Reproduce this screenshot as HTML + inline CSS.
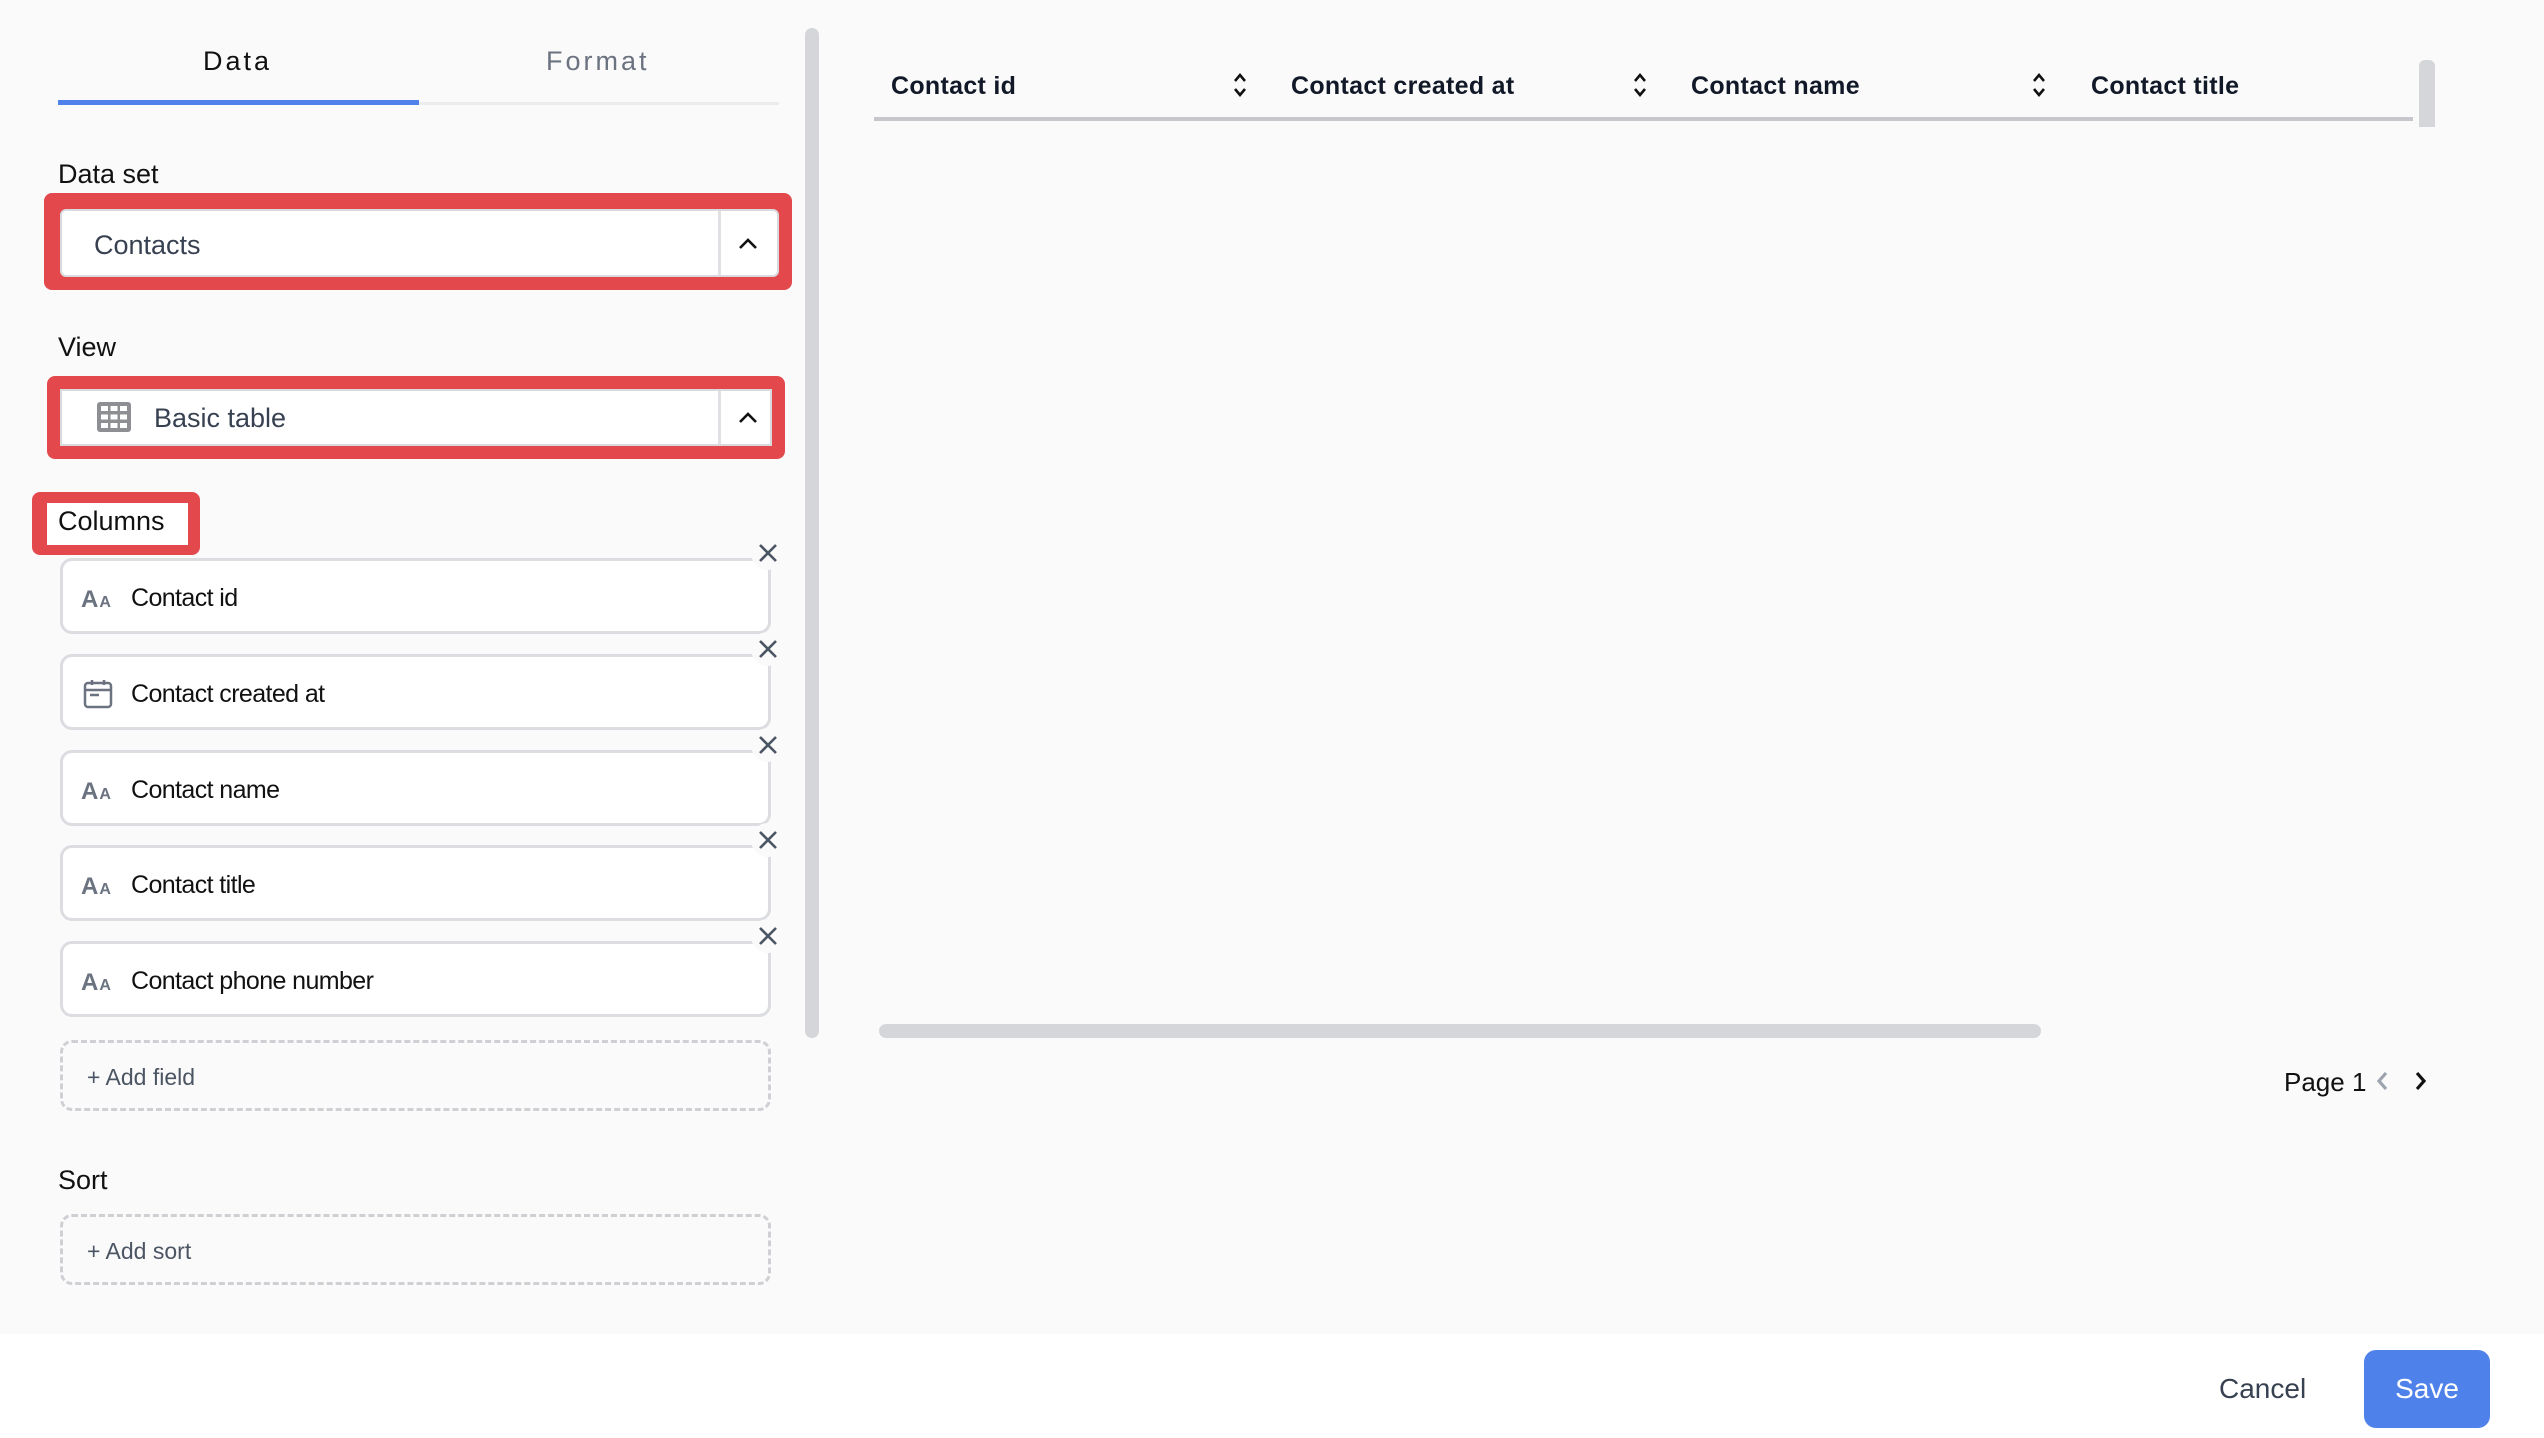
<!DOCTYPE html>
<html><head><meta charset="utf-8"><style>
*{margin:0;padding:0;box-sizing:border-box}
body{width:2544px;height:1438px;background:#fafafa;font-family:"Liberation Sans",sans-serif;color:#111827;position:relative;overflow:hidden}
.a{position:absolute}
.lbl{font-size:27px;color:#111;line-height:1}
.tab{font-size:27px;letter-spacing:3px;line-height:1}
.red{background:#e3484d;border-radius:8px}
.inp{background:#fff;border:2px solid #d9dadd;border-radius:6px}
.card{position:absolute;left:60px;width:711px;height:76px;background:#fff;border:3px solid #dcdde0;border-radius:12px}
.card span{position:absolute;left:68px;top:23px;font-size:25px;letter-spacing:-0.6px;color:#111}
.aa{position:absolute;left:18px;top:25px;font-size:24px;color:#6b7280;font-weight:bold;letter-spacing:1px}
.aa small{font-size:16px}
.dash{position:absolute;left:60px;width:711px;height:71px;border:3px dashed #cfd0d4;border-radius:12px}
.dash span{position:absolute;left:24px;top:21px;font-size:23px;color:#4b5563}
.th{position:absolute;top:72px;font-size:25px;font-weight:bold;letter-spacing:0.3px;color:#111827}
</style></head><body>
<div class="a tab" style="left:203px;top:48px;color:#111">Data</div>
<div class="a tab" style="left:546px;top:48px;color:#6b7280">Format</div>
<div class="a" style="left:58px;top:102px;width:721px;height:3px;background:#ececee"></div>
<div class="a" style="left:58px;top:100px;width:361px;height:5px;background:#4f81eb"></div>
<div class="a" style="left:805px;top:28px;width:14px;height:1010px;background:#d4d6da;border-radius:7px"></div>

<div class="a lbl" style="left:58px;top:161px">Data set</div>
<div class="a red" style="left:44px;top:193px;width:748px;height:97px"></div>
<div class="a inp" style="left:60px;top:209px;width:719px;height:68px"></div>
<div class="a" style="left:94px;top:230px;font-size:27px;color:#374151">Contacts</div>
<div class="a" style="left:718px;top:211px;width:3px;height:64px;background:#e0e1e4"></div>
<svg class="a" style="left:736px;top:233px" width="24" height="20" viewBox="0 0 24 20"><path d="M4 15 L12 7 L20 15" fill="none" stroke="#111" stroke-width="2.6"/></svg>

<div class="a lbl" style="left:58px;top:334px">View</div>
<div class="a red" style="left:47px;top:376px;width:738px;height:83px"></div>
<div class="a inp" style="left:60px;top:389px;width:712px;height:57px;border-radius:0"></div>
<svg class="a" style="left:97px;top:402px" width="34" height="30" viewBox="0 0 34 30"><rect x="0" y="0" width="34" height="30" rx="3" fill="#8e8f93"/><g fill="#fff"><rect x="4" y="4" width="7" height="5"/><rect x="13.5" y="4" width="7" height="5"/><rect x="23" y="4" width="7" height="5"/><rect x="4" y="12.5" width="7" height="5"/><rect x="13.5" y="12.5" width="7" height="5"/><rect x="23" y="12.5" width="7" height="5"/><rect x="4" y="21" width="7" height="5"/><rect x="13.5" y="21" width="7" height="5"/><rect x="23" y="21" width="7" height="5"/></g></svg>
<div class="a" style="left:154px;top:403px;font-size:27px;color:#374151">Basic table</div>
<div class="a" style="left:718px;top:391px;width:3px;height:53px;background:#e0e1e4"></div>
<svg class="a" style="left:736px;top:407px" width="24" height="20" viewBox="0 0 24 20"><path d="M4 15 L12 7 L20 15" fill="none" stroke="#111" stroke-width="2.6"/></svg>

<div class="a red" style="left:32px;top:492px;width:168px;height:63px"></div>
<div class="a" style="left:47px;top:503px;width:141px;height:42px;background:#fff"></div>
<div class="a lbl" style="left:58px;top:508px">Columns</div>

<div class="card" style="top:558px"><div class="aa">A<small>A</small></div><span>Contact id</span></div>
<div class="card" style="top:654px"><svg style="position:absolute;left:20px;top:22px" width="30" height="30" viewBox="0 0 30 30"><rect x="2" y="4" width="26" height="24" rx="3" fill="none" stroke="#6b7280" stroke-width="2.5"/><line x1="2" y1="11" x2="28" y2="11" stroke="#6b7280" stroke-width="2.5"/><line x1="9" y1="1" x2="9" y2="6" stroke="#6b7280" stroke-width="2.5"/><line x1="21" y1="1" x2="21" y2="6" stroke="#6b7280" stroke-width="2.5"/><line x1="7" y1="16" x2="16" y2="16" stroke="#6b7280" stroke-width="2.5"/></svg><span>Contact created at</span></div>
<div class="card" style="top:750px"><div class="aa">A<small>A</small></div><span>Contact name</span></div>
<div class="card" style="top:845px"><div class="aa">A<small>A</small></div><span>Contact title</span></div>
<div class="card" style="top:941px"><div class="aa">A<small>A</small></div><span>Contact phone number</span></div>

<svg class="a" style="left:750px;top:535px" width="36" height="440" viewBox="0 0 36 440">
<g fill="#fafafa"><circle cx="18" cy="18" r="17"/><circle cx="18" cy="114" r="17"/><circle cx="18" cy="210" r="17"/><circle cx="18" cy="305" r="17"/><circle cx="18" cy="401" r="17"/></g>
<g stroke="#4b5563" stroke-width="2.6" fill="none"><path d="M10 10 L26 26 M26 10 L10 26"/><path d="M10 106 L26 122 M26 106 L10 122"/><path d="M10 202 L26 218 M26 202 L10 218"/><path d="M10 297 L26 313 M26 297 L10 313"/><path d="M10 393 L26 409 M26 393 L10 409"/></g></svg>

<div class="dash" style="top:1040px"><span>+ Add field</span></div>
<div class="a lbl" style="left:58px;top:1167px">Sort</div>
<div class="dash" style="top:1214px"><span>+ Add sort</span></div>

<div class="th" style="left:891px">Contact id</div>
<div class="th" style="left:1291px">Contact created at</div>
<div class="th" style="left:1691px">Contact name</div>
<div class="th" style="left:2091px">Contact title</div>
<svg class="a" style="left:1230px;top:70px" width="20" height="30" viewBox="0 0 20 30"><path d="M5 11 L10 5 L15 11 M5 19 L10 25 L15 19" fill="none" stroke="#111" stroke-width="2.6"/></svg>
<svg class="a" style="left:1630px;top:70px" width="20" height="30" viewBox="0 0 20 30"><path d="M5 11 L10 5 L15 11 M5 19 L10 25 L15 19" fill="none" stroke="#111" stroke-width="2.6"/></svg>
<svg class="a" style="left:2029px;top:70px" width="20" height="30" viewBox="0 0 20 30"><path d="M5 11 L10 5 L15 11 M5 19 L10 25 L15 19" fill="none" stroke="#111" stroke-width="2.6"/></svg>
<div class="a" style="left:874px;top:117px;width:1539px;height:4px;background:#c6c7cc"></div>
<div class="a" style="left:2419px;top:60px;width:16px;height:67px;background:#d4d6da;border-radius:6px 6px 0 0"></div>
<div class="a" style="left:879px;top:1024px;width:1162px;height:14px;background:#d4d6da;border-radius:7px"></div>

<div class="a" style="left:2284px;top:1067px;font-size:26px;color:#111">Page 1</div>
<svg class="a" style="left:2372px;top:1068px" width="20" height="26" viewBox="0 0 20 26"><path d="M14 5 L7 13 L14 21" fill="none" stroke="#9ca3af" stroke-width="3.2"/></svg>
<svg class="a" style="left:2411px;top:1068px" width="20" height="26" viewBox="0 0 20 26"><path d="M6 5 L13 13 L6 21" fill="none" stroke="#111" stroke-width="3.2"/></svg>

<div class="a" style="left:0;top:1334px;width:2544px;height:104px;background:#fff"></div>
<div class="a" style="left:2219px;top:1373px;font-size:28px;color:#374151">Cancel</div>
<div class="a" style="left:2364px;top:1350px;width:126px;height:78px;background:#4f81eb;border-radius:12px"></div>
<div class="a" style="left:2364px;top:1373px;width:126px;text-align:center;font-size:28px;color:#fff">Save</div>
</body></html>
